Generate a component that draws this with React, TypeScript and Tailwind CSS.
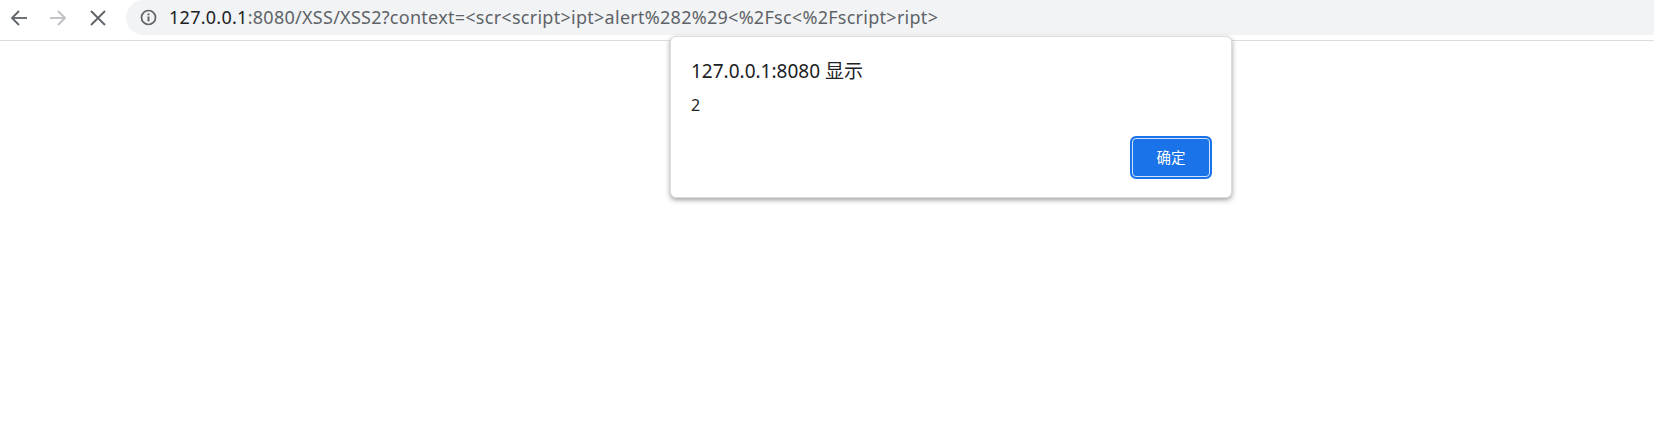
const FONT = 'font-["Noto_Sans","Noto_Sans_CJK_SC",sans-serif]';

function BackIcon({ className }: { className: string }) {
  return (
    <svg viewBox="0 0 20 20" className={className} fill="none" stroke="currentColor" strokeWidth="1.8">
      <path d="M18 10H3" />
      <path d="M10 3 3 10l7 7" />
    </svg>
  );
}

export default function App() {
  return (
    <div className={`relative h-[428px] w-[1654px] overflow-hidden bg-white ${FONT}`}>
      {/* Toolbar */}
      <div className="flex h-[41px] items-start border-b border-[#dadce0]">
        <div className="flex h-[35px] w-[126px] shrink-0 items-center text-[#5f6368]">
          <BackIcon className="ml-[9px] h-[20px] w-[20px]" />
          <BackIcon className="ml-[19px] h-[20px] w-[20px] rotate-180 text-[#bcbec1]" />
          <svg viewBox="0 0 20 20" className="ml-[20px] h-[20px] w-[20px]" fill="none" stroke="currentColor" strokeWidth="1.8">
            <path d="M3 3l14 14M17 3 3 17" />
          </svg>
        </div>
        <div className="flex h-[35px] flex-1 items-center rounded-l-[18px] bg-[#f1f3f4]">
          <svg viewBox="0 0 16 16" className="ml-[14px] h-[17px] w-[17px] text-[#5f6368]" fill="none" stroke="currentColor">
            <circle cx="8" cy="8" r="6.6" strokeWidth="1.6" />
            <path d="M8 7v4.6" strokeWidth="1.8" />
            <path d="M8 4.2v1.7" strokeWidth="1.8" />
          </svg>
          <div className="ml-[12px] whitespace-nowrap text-[18px] tracking-[0.27px] text-[#5f6368]">
            <span className="text-[#202124]">127.0.0.1</span>:8080/XSS/XSS2?context=&lt;scr&lt;script&gt;ipt&gt;alert%282%29&lt;%2Fsc&lt;%2Fscript&gt;ript&gt;
          </div>
        </div>
      </div>

      {/* Alert dialog */}
      <div className="absolute left-[670px] top-[36px] flex h-[162px] w-[562px] flex-col rounded-[6px] border border-[#dadce0] bg-white pl-[20px] pr-[19px] shadow-[0_2px_5px_rgba(60,64,67,0.5)]">
        <div className="mt-[21px] text-[19px] leading-[26px] text-[#202124]">127.0.0.1:8080 显示</div>
        <div className="mt-[10px] text-[16px] leading-[22px] text-[#202124]">2</div>
        <div className="mt-auto mb-[18px] flex justify-end">
          <button className="flex h-[43px] w-[82px] items-center justify-center rounded-[6px] border-[3px] border-[#1a73e8] bg-[#1a73e8] pt-[1px] text-[14.5px] text-white outline outline-1 -outline-offset-3 outline-[#cfe2fb]">
            确定
          </button>
        </div>
      </div>
    </div>
  );
}
